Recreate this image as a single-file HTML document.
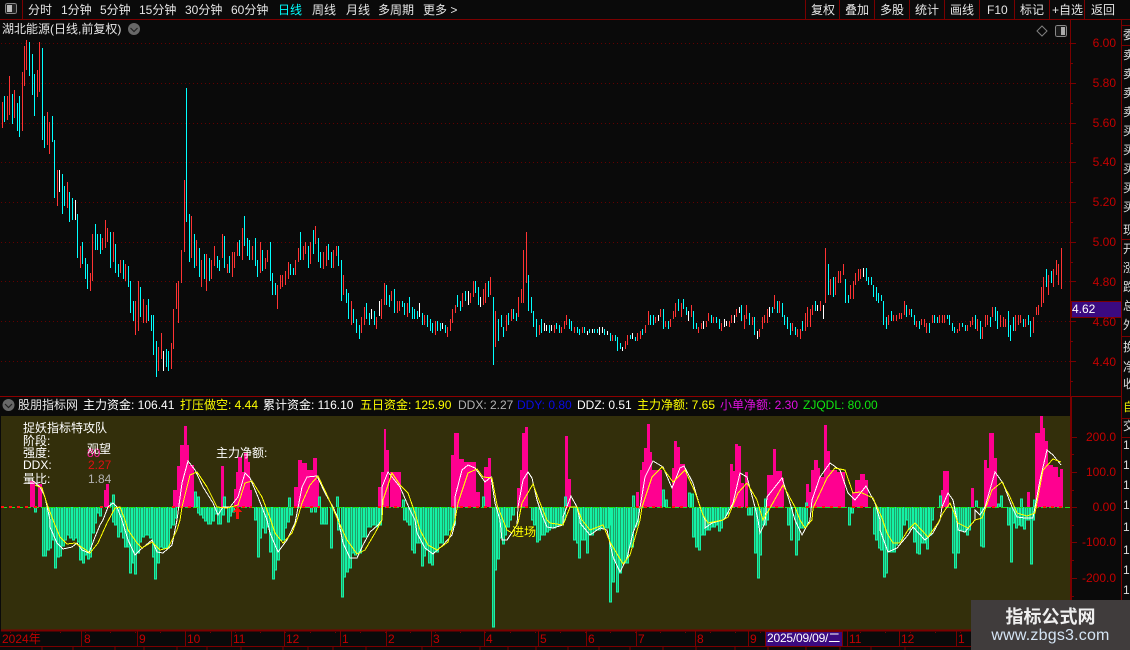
<!DOCTYPE html>
<html><head><meta charset="utf-8"><style>
html,body{margin:0;padding:0;background:#0a0a0a}
#r{position:relative;width:1130px;height:650px;overflow:hidden;background:#0a0a0a;font:12px/14px "Liberation Sans","WenQuanYi Zen Hei","Noto Sans CJK SC",sans-serif;color:#e6e6e6}
#r span{position:absolute;white-space:pre}
svg{position:absolute;left:0;top:0}
.p{color:#c40000;text-align:right;right:14px}
.y{color:#ff0}.w{color:#fff}.g{color:#b4b4b4}
</style></head><body><div id="r">
<svg width="1130" height="650" shape-rendering="crispEdges" fill="none">
<!-- frames -->
<g stroke="#7a0000">
<path d="M0 19.5H1130M22.5 0V19M805.5 0V19M839.5 0V19M874.5 0V19M909.5 0V19M944.5 0V19M979.5 0V19M1014.5 0V19M1049.5 0V19M1084.5 0V19"/>
<path d="M1122 25.5H1130M1122 45.5H1130M1122 239.5H1130M1122 336.5H1130M1122 418.5H1130M1122 437.5H1130"/>
<path d="M1070.5 20V396M1121.5 20V650"/>
<path d="M1071 43.5H1076M1071 83.5H1076M1071 123.5H1076M1071 162.5H1076M1071 202.5H1076M1071 242.5H1076M1071 281.5H1076M1071 321.5H1076M1071 361.5H1076M1071 63.5H1073M1071 103.5H1073M1071 143.5H1073M1071 182.5H1073M1071 222.5H1073M1071 262.5H1073M1071 301.5H1073M1071 341.5H1073M1071 381.5H1073"/>
<path d="M1072 437.5H1077M1072 472.5H1077M1072 507.5H1077M1072 542.5H1077M1072 578.5H1077M1072 454.5H1074M1072 490.5H1074M1072 525.5H1074M1072 560.5H1074M1072 596.5H1074"/>
</g>
<path d="M0 396.5H1070M1072 396.5H1121" stroke="#8c0000"/>
<path d="M1071 396V650" stroke="#7a0000" stroke-width="2"/>
<g stroke="#640000" stroke-dasharray="1 3">
<path d="M1 43.5H1070M1 83.5H1070M1 123.5H1070M1 162.5H1070M1 202.5H1070M1 242.5H1070M1 281.5H1070M1 321.5H1070M1 361.5H1070"/>
</g>
<!-- candles -->
<path stroke="#ff3333" d="M2.5 102V128M7.5 96V120M9.5 76V115M14.5 90V118M22.5 72V131M24.5 46V86M26.5 40V70M37.5 70V97M39.5 42V92M47.5 112V145M49.5 122V154M57.5 170V206M67.5 182V208M80.5 246V268M90.5 273V291M92.5 234V281M102.5 238V250M105.5 220V248M107.5 228V242M113.5 232V262M120.5 260V273M125.5 264V281M135.5 301V335M138.5 281V331M143.5 299V323M146.5 305V323M158.5 347V371M161.5 333V359M171.5 343V369M173.5 309V349M176.5 283V309M178.5 281V323M181.5 250V283M184.5 180V252M191.5 216V258M196.5 240V266M201.5 260V287M206.5 254V291M211.5 260V279M214.5 246V266M222.5 234V258M227.5 264V273M232.5 252V277M234.5 252V268M237.5 242V256M242.5 228V260M252.5 246V260M260.5 242V273M265.5 258V269M267.5 250V262M277.5 285V309M280.5 275V289M282.5 275V287M285.5 271V285M288.5 262V279M295.5 260V275M298.5 248V262M303.5 246V260M305.5 242V254M310.5 242V264M315.5 226V244M323.5 252V269M326.5 246V266M333.5 250V268M336.5 246V256M343.5 275V295M351.5 301V325M361.5 317V333M364.5 307V325M376.5 317V329M381.5 299V319M384.5 283V305M391.5 291V301M397.5 301V313M399.5 301V311M407.5 303V317M424.5 315V325M435.5 321V335M447.5 327V337M450.5 319V331M452.5 309V323M455.5 305V313M462.5 293V307M470.5 293V303M473.5 281V297M483.5 289V305M485.5 283V303M490.5 277V295M495.5 311V347M506.5 315V331M511.5 309V321M518.5 297V317M521.5 289V303M523.5 250V303M526.5 232V283M539.5 325V335M554.5 325V333M561.5 327V333M564.5 321V329M566.5 315V325M574.5 327V333M582.5 327V333M612.5 335V341M625.5 341V349M627.5 335V345M637.5 333V341M640.5 331V339M645.5 325V333M648.5 311V325M655.5 317V323M660.5 309V317M665.5 321V327M670.5 319V327M673.5 311V319M675.5 303V317M681.5 303V317M691.5 305V317M698.5 327V333M701.5 323V329M706.5 321V327M708.5 313V321M713.5 317V323M721.5 323V331M729.5 321V327M731.5 315V323M736.5 309V317M744.5 315V329M746.5 305V319M752.5 317V325M759.5 329V337M762.5 317V329M764.5 315V323M767.5 309V323M774.5 295V309M779.5 301V313M792.5 323V331M797.5 329V337M800.5 329V339M805.5 313V331M807.5 307V327M810.5 309V327M812.5 305V315M820.5 301V311M825.5 248V303M830.5 279V295M835.5 277V295M838.5 271V283M840.5 271V283M843.5 264V275M850.5 285V299M853.5 281V299M855.5 273V285M858.5 269V281M860.5 269V279M888.5 315V325M893.5 315V321M896.5 315V321M899.5 313V319M901.5 313V319M904.5 301V315M909.5 309V315M916.5 321V327M921.5 319V325M924.5 319V327M926.5 323V333M932.5 315V323M939.5 315V323M942.5 315V323M944.5 315V323M957.5 329V333M959.5 323V331M967.5 325V331M970.5 321V327M972.5 317V325M977.5 319V331M982.5 327V339M985.5 315V327M987.5 315V325M992.5 307V317M1000.5 315V327M1003.5 317V327M1005.5 319V327M1015.5 315V331M1018.5 315V325M1020.5 315V323M1025.5 319V327M1033.5 317V333M1036.5 307V315M1038.5 305V315M1041.5 287V307M1043.5 277V303M1048.5 275V295M1053.5 269V287M1056.5 260V275M1058.5 264V285M1061.5 248V289"/>
<path stroke="#00ffff" d="M4.5 96V122M12.5 94V124M17.5 103V131M19.5 96V137M29.5 42V76M32.5 54V95M34.5 74V116M42.5 48V140M44.5 116V148M52.5 116V142M54.5 140V198M62.5 174V214M64.5 186V206M69.5 192V222M72.5 198V220M77.5 214V258M82.5 242V264M85.5 258V279M87.5 264V289M95.5 224V250M97.5 234V250M100.5 234V254M110.5 232V268M115.5 244V273M118.5 264V277M123.5 260V279M128.5 266V287M130.5 281V313M133.5 301V321M140.5 287V317M148.5 299V321M151.5 315V331M153.5 315V355M156.5 341V377M166.5 349V367M168.5 351V371M186.5 88V222M189.5 214V262M194.5 234V268M199.5 248V277M204.5 254V279M209.5 258V281M217.5 256V268M219.5 260V271M224.5 236V268M229.5 256V273M239.5 240V256M244.5 216V246M247.5 238V256M249.5 240V260M255.5 238V266M257.5 260V277M262.5 250V271M270.5 242V281M272.5 273V295M275.5 283V295M290.5 264V275M293.5 268V275M300.5 232V260M308.5 246V268M313.5 230V254M318.5 238V262M320.5 252V268M328.5 244V260M331.5 252V268M338.5 246V266M341.5 260V301M346.5 289V303M348.5 293V319M353.5 309V323M356.5 319V333M359.5 325V339M366.5 303V319M369.5 313V325M374.5 311V325M386.5 285V305M389.5 295V307M394.5 289V313M402.5 301V307M404.5 303V315M409.5 297V313M412.5 307V319M414.5 309V319M417.5 311V319M422.5 313V325M427.5 315V327M430.5 319V331M432.5 323V333M437.5 321V331M440.5 323V331M445.5 325V333M457.5 295V307M460.5 301V311M465.5 291V301M475.5 281V293M478.5 287V305M488.5 281V297M493.5 297V365M498.5 319V341M501.5 315V327M503.5 327V337M508.5 313V325M513.5 309V319M516.5 313V321M528.5 275V311M531.5 297V313M533.5 311V327M536.5 319V337M541.5 319V333M549.5 325V333M556.5 323V329M559.5 325V333M569.5 319V329M571.5 321V331M577.5 327V333M579.5 329V335M584.5 327V333M589.5 329V333M594.5 329V333M597.5 329V333M604.5 329V335M610.5 333V341M615.5 335V341M617.5 337V351M620.5 343V349M630.5 335V339M635.5 337V341M642.5 329V335M650.5 315V325M653.5 315V325M663.5 309V329M668.5 321V329M678.5 299V311M683.5 299V309M686.5 307V315M693.5 311V329M696.5 323V329M711.5 315V323M716.5 317V323M719.5 319V329M741.5 305V321M749.5 313V325M754.5 317V335M772.5 307V313M777.5 301V313M782.5 303V317M784.5 315V325M787.5 317V329M790.5 323V335M795.5 327V335M802.5 321V331M815.5 301V311M828.5 264V295M833.5 277V297M845.5 279V303M848.5 295V303M866.5 268V281M868.5 277V285M871.5 277V285M873.5 285V297M876.5 287V301M878.5 293V303M881.5 295V301M883.5 301V325M886.5 317V329M891.5 311V321M906.5 305V317M911.5 309V317M914.5 315V325M919.5 321V329M929.5 323V333M934.5 315V323M937.5 317V323M947.5 315V319M949.5 315V325M952.5 323V331M954.5 327V333M962.5 323V327M965.5 325V331M975.5 315V329M980.5 321V339M990.5 317V327M995.5 307V321M997.5 311V329M1008.5 311V337M1010.5 325V341M1013.5 317V331M1023.5 319V327M1028.5 315V325M1030.5 321V337M1046.5 269V287M1051.5 271V283"/>
<path stroke="#ffffff" d="M59.5 170V192M75.5 200V220M163.5 351V371M371.5 309V319M379.5 301V316M419.5 303V317M442.5 323V329M468.5 291V305M480.5 297V307M544.5 323V331M546.5 325V331M551.5 325V331M587.5 331V335M592.5 329V333M599.5 327V335M602.5 327V333M607.5 331V335M622.5 347V351M632.5 333V339M658.5 315V321M688.5 311V321M703.5 321V329M724.5 319V327M726.5 321V326M734.5 315V323M739.5 307V313M757.5 331V339M769.5 307V317M817.5 305V311M823.5 305V319M863.5 268V277"/>
</svg>
<svg width="1130" height="650" fill="none">
<rect x="1" y="416" width="1069" height="214" fill="#332f0b" shape-rendering="crispEdges"/>
<path fill="#ff0090" shape-rendering="crispEdges" d="M30 481H35V507H30ZM38 484H42V507H38ZM104 490H106V507H104ZM106 484H109V507H106ZM173 490H177V507H173ZM177 466H180V507H177ZM180 445H184V507H180ZM184 426H187V507H184ZM187 445H189V507H187ZM189 465H194V507H189ZM221 466H224V507H221ZM234 489H236V507H234ZM236 472H238V507H236ZM238 457H240V507H238ZM240 457H242V507H240ZM242 472H244V507H242ZM244 453H248V507H244ZM248 462H250V507H248ZM250 490H252V507H250ZM294 487H298V507H294ZM298 460H302V507H298ZM302 463H307V507H302ZM307 470H313V507H307ZM313 458H317V507H313ZM317 480H319V507H317ZM378 487H381V507H378ZM381 472H384V507H381ZM384 429H386V507H384ZM386 450H389V507H386ZM390 472H401V507H390ZM451 455H454V507H451ZM454 433H459V507H454ZM459 459H464V507H459ZM464 462H476V507H464ZM476 492H480V507H476ZM484 467H488V507H484ZM488 458H491V507H488ZM517 488H520V507H517ZM520 470H522V507H520ZM522 433H525V507H522ZM525 427H528V507H525ZM565 436H568V507H565ZM568 479H571V507H568ZM636 492H639V507H636ZM640 470H642V507H640ZM642 462H644V507H642ZM644 448H647V507H644ZM647 424H650V507H647ZM650 452H652V507H650ZM652 470H662V507H652ZM672 468H674V507H672ZM674 441H677V507H674ZM677 447H680V507H677ZM680 464H685V507H680ZM685 473H687V507H685ZM730 464H733V507H730ZM733 471H735V507H733ZM735 444H738V507H735ZM738 446H741V507H738ZM741 483H744V507H741ZM745 472H748V507H745ZM767 475H773V507H767ZM773 449H776V507H773ZM776 471H782V507H776ZM782 478H784V507H782ZM806 484H809V507H806ZM809 492H811V507H809ZM811 470H814V507H811ZM814 460H818V507H814ZM818 468H820V507H818ZM820 477H824V507H820ZM824 425H827V507H824ZM827 451H830V507H827ZM830 470H837V507H830ZM837 472H845V507H837ZM852 492H855V507H852ZM855 480H860V507H855ZM860 474H865V507H860ZM865 480H868V507H865ZM941 490H943V507H941ZM943 471H949V507H943ZM971 488H974V507H971ZM984 460H987V507H984ZM987 468H989V507H987ZM989 433H994V507H989ZM994 458H997V507H994ZM1027 492H1030V507H1027ZM1035 433H1040V507H1035ZM1040 416H1043V507H1040ZM1043 428H1045V507H1043ZM1045 441H1048V507H1045ZM1048 465H1053V507H1048ZM1053 467H1058V507H1053ZM1058 477H1060V507H1058ZM1060 469H1063V507H1060Z"/>
<path stroke="#14f2a6" fill="#14f2a6" fill-opacity=".6" shape-rendering="crispEdges" d="M34.5 507V512h2V507M42.5 507V556h2V507M44.5 507V556h2V507M47.5 507V550h2V507M49.5 507V548h2V507M52.5 507V540h2V507M54.5 507V568h2V507M57.5 507V557h2V507M59.5 507V556h2V507M62.5 507V546h2V507M64.5 507V540h2V507M67.5 507V535h2V507M69.5 507V538h2V507M72.5 507V540h2V507M74.5 507V538h2V507M77.5 507V542h2V507M79.5 507V560h2V507M82.5 507V563h2V507M84.5 507V555h2V507M87.5 507V559h2V507M89.5 507V557h2V507M92.5 507V533h2V507M94.5 507V523h2V507M97.5 507V513h2V507M99.5 507V516h2V507M110.5 507V503h2V507M112.5 507V495h2V507M112.5 507V522h2V507M114.5 507V525h2V507M117.5 507V537h2V507M119.5 507V532h2V507M122.5 507V538h2V507M124.5 507V547h2V507M127.5 507V547h2V507M129.5 507V573h2V507M132.5 507V563h2V507M134.5 507V574h2V507M137.5 507V553h2V507M139.5 507V542h2V507M142.5 507V537h2V507M144.5 507V535h2V507M147.5 507V535h2V507M149.5 507V538h2V507M152.5 507V557h2V507M154.5 507V579h2V507M157.5 507V563h2V507M159.5 507V547h2V507M162.5 507V548h2V507M164.5 507V548h2V507M167.5 507V548h2V507M169.5 507V528h2V507M172.5 507V525h2V507M174.5 507V518h2V507M194.5 507V492h2V507M197.5 507V497h2V507M197.5 507V513h2V507M199.5 507V515h2V507M202.5 507V518h2V507M204.5 507V521h2V507M207.5 507V524h2V507M209.5 507V524h2V507M212.5 507V521h2V507M214.5 507V514h2V507M217.5 507V524h2V507M219.5 507V524h2V507M222.5 507V515h2V507M223.5 507V497h2V507M227.5 507V522h2V507M229.5 507V516h2V507M232.5 507V512h2V507M254.5 507V520h2V507M257.5 507V557h2V507M259.5 507V538h2V507M262.5 507V528h2V507M264.5 507V533h2V507M267.5 507V527h2V507M269.5 507V552h2V507M272.5 507V579h2V507M274.5 507V570h2V507M277.5 507V560h2V507M279.5 507V540h2V507M282.5 507V540h2V507M284.5 507V528h2V507M287.5 507V522h2V507M288.5 507V498h2V507M290.5 507V515h2V507M310.5 507V512h2V507M314.5 507V512h2V507M318.5 507V497h2V507M320.5 507V524h2V507M323.5 507V524h2V507M325.5 507V524h2V507M330.5 507V548h2V507M336.5 507V497h2V507M337.5 507V530h2V507M341.5 507V597h2V507M343.5 507V577h2V507M346.5 507V572h2V507M349.5 507V568h2V507M351.5 507V553h2V507M354.5 507V555h2V507M356.5 507V553h2V507M359.5 507V553h2V507M361.5 507V537h2V507M364.5 507V537h2V507M366.5 507V527h2V507M369.5 507V527h2V507M371.5 507V525h2V507M374.5 507V525h2V507M376.5 507V527h2V507M379.5 507V525h2V507M402.5 507V500h2V507M403.5 507V520h2V507M406.5 507V522h2V507M408.5 507V525h2V507M411.5 507V550h2V507M413.5 507V553h2V507M416.5 507V543h2V507M418.5 507V543h2V507M421.5 507V566h2V507M423.5 507V556h2V507M426.5 507V550h2V507M428.5 507V563h2V507M431.5 507V565h2V507M433.5 507V552h2V507M436.5 507V552h2V507M438.5 507V543h2V507M441.5 507V543h2V507M443.5 507V535h2V507M446.5 507V535h2V507M448.5 507V530h2V507M451.5 507V530h2V507M453.5 507V525h2V507M482.5 507V497h2V507M492.5 507V627h2V507M494.5 507V570h2V507M497.5 507V559h2V507M499.5 507V538h2V507M502.5 507V544h2V507M504.5 507V535h2V507M507.5 507V527h2V507M509.5 507V520h2V507M512.5 507V515h2V507M531.5 507V520h2V507M533.5 507V525h2V507M536.5 507V542h2V507M538.5 507V540h2V507M541.5 507V535h2V507M543.5 507V535h2V507M546.5 507V532h2V507M548.5 507V530h2V507M551.5 507V528h2V507M553.5 507V528h2V507M556.5 507V526h2V507M558.5 507V525h2V507M561.5 507V525h2V507M563.5 507V520h2V507M564.5 507V497h2V507M573.5 507V540h2V507M576.5 507V543h2V507M578.5 507V558h2V507M581.5 507V540h2V507M583.5 507V540h2V507M586.5 507V553h2V507M588.5 507V535h2V507M591.5 507V535h2V507M593.5 507V530h2V507M596.5 507V530h2V507M598.5 507V530h2V507M601.5 507V528h2V507M603.5 507V528h2V507M606.5 507V528h2V507M608.5 507V525h2V507M609.5 507V602h2V507M612.5 507V582h2V507M614.5 507V560h2V507M616.5 507V592h2V507M619.5 507V573h2V507M622.5 507V563h2V507M624.5 507V563h2V507M626.5 507V563h2V507M629.5 507V547h2V507M631.5 507V547h2V507M632.5 507V496h2V507M634.5 507V527h2V507M636.5 507V525h2V507M662.5 507V490h2V507M665.5 507V500h2V507M688.5 507V493h2V507M691.5 507V494h2V507M692.5 507V537h2V507M695.5 507V547h2V507M698.5 507V550h2V507M700.5 507V535h2V507M703.5 507V535h2V507M705.5 507V530h2V507M708.5 507V530h2V507M710.5 507V527h2V507M713.5 507V527h2V507M715.5 507V525h2V507M718.5 507V531h2V507M720.5 507V528h2V507M723.5 507V518h2V507M726.5 507V514h2V507M747.5 507V515h2V507M750.5 507V515h2V507M754.5 507V553h2V507M757.5 507V578h2V507M759.5 507V555h2V507M761.5 507V525h2V507M764.5 507V525h2V507M764.5 507V499h2V507M766.5 507V520h2V507M787.5 507V525h2V507M790.5 507V540h2V507M795.5 507V555h2V507M797.5 507V540h2V507M800.5 507V528h2V507M802.5 507V528h2V507M805.5 507V526h2V507M805.5 507V503h2V507M848.5 507V525h2V507M851.5 507V513h2V507M873.5 507V534h2V507M875.5 507V540h2V507M878.5 507V548h2V507M880.5 507V550h2V507M883.5 507V577h2V507M885.5 507V573h2V507M888.5 507V552h2V507M890.5 507V552h2V507M893.5 507V552h2V507M895.5 507V545h2V507M897.5 507V543h2V507M900.5 507V540h2V507M903.5 507V525h2V507M906.5 507V520h2V507M908.5 507V530h2V507M910.5 507V525h2V507M913.5 507V542h2V507M916.5 507V553h2V507M918.5 507V554h2V507M921.5 507V543h2V507M923.5 507V543h2V507M926.5 507V549h2V507M929.5 507V535h2V507M931.5 507V520h2V507M939.5 507V496h2V507M952.5 507V553h2V507M954.5 507V568h2V507M957.5 507V553h2V507M959.5 507V530h2V507M961.5 507V530h2V507M963.5 507V532h2V507M966.5 507V535h2V507M968.5 507V530h2V507M975.5 507V501h2V507M980.5 507V546h2V507M982.5 507V547h2V507M997.5 507V504h2V507M1000.5 507V496h2V507M1007.5 507V525h2V507M1010.5 507V562h2V507M1012.5 507V523h2V507M1015.5 507V528h2V507M1017.5 507V525h2V507M1020.5 507V499h2V507M1020.5 507V526h2V507M1023.5 507V529h2V507M1025.5 507V520h2V507M1027.5 507V520h2V507M1030.5 507V564h2V507M1032.5 507V520h2V507M1033.5 507V500h2V507"/>
<path stroke="#19e619" shape-rendering="crispEdges" d="M1 507.5H1070" stroke-dasharray="6 2"/>
<path stroke="#ff1010" stroke-width="2" shape-rendering="crispEdges" d="M1 507H30M34 507H42M100 507H110M172 507H194M234 507H252M294 507H320M378 507H400M452 507H491M517 507H528M565 507H571M636 507H662M672 507H687M730 507H748M767 507H784M806 507H845M852 507H868M941 507H949M984 507H997M1035 507H1063" stroke-dasharray="3 5"/>
<polyline stroke="#ffffff" shape-rendering="crispEdges" points="32,480 40,487 45,497 50,520 50,527 57,543 63,549 72,547 77,543 82,550 89,553 95,537 100,525 103,520 108,507 113,503 117,507 122,520 128,540 135,555 140,550 152,540 157,552 163,553 172,545 175,530 177,520 182,483 188,461 195,470 203,487 213,503 218,515 223,507 230,507 238,497 245,473 250,478 258,497 267,520 270,533 278,552 287,540 295,523 297,513 302,487 307,477 317,476 325,493 333,507 338,518 343,543 350,558 357,558 363,545 370,532 378,525 382,520 382,487 388,472 400,487 410,510 415,520 417,533 425,548 433,554 443,545 452,535 455,523 455,497 462,470 468,465 475,468 485,482 491,477 495,503 500,520 502,540 507,540 517,525 518,507 523,480 528,472 532,478 537,500 542,515 547,527 553,528 563,525 563,517 571,496 577,507 580,520 580,523 590,535 600,528 607,530 613,557 620,572 627,558 633,533 638,520 645,477 653,461 663,467 672,488 680,468 684,466 693,483 700,507 705,520 705,528 712,523 723,520 725,518 733,503 740,473 747,477 755,507 758,520 760,533 765,523 767,497 782,478 790,503 795,520 802,535 810,520 812,500 820,477 830,463 840,470 848,493 855,500 866,486 875,503 880,520 880,530 888,552 897,548 908,535 913,527 925,540 933,533 940,520 942,507 948,493 953,500 957,520 958,530 965,532 975,520 975,510 980,515 985,507 995,472 1003,483 1012,507 1017,517 1025,518 1033,518 1040,480 1047,450 1053,455 1061,465"/>
<polyline stroke="#ffff00" shape-rendering="crispEdges" points="35,485 42,488 48,507 55,525 60,537 67,544 75,543 83,548 90,553 98,543 107,523 115,508 120,507 125,520 128,530 137,543 142,548 152,542 160,550 168,548 177,530 180,520 182,507 190,475 197,472 207,487 217,507 227,508 238,505 245,483 252,481 262,497 270,518 275,533 283,543 292,533 297,520 302,503 310,485 318,476 328,497 337,518 347,540 357,554 365,550 375,533 382,520 383,500 392,473 400,485 408,493 415,513 420,530 428,545 437,550 448,542 455,520 458,503 468,473 477,469 483,477 492,478 497,505 503,520 507,530 512,533 518,523 522,503 533,484 540,503 547,520 550,523 563,525 570,507 577,507 582,520 590,530 603,525 610,542 623,564 630,555 640,520 642,507 652,477 662,467 673,482 685,470 695,492 703,515 708,523 723,520 728,517 738,493 747,483 757,500 763,520 770,508 783,485 795,507 800,520 805,528 812,520 813,508 827,478 835,468 845,470 853,493 860,492 873,498 882,518 887,533 893,543 900,543 908,530 915,523 928,537 938,523 943,513 950,503 955,515 958,523 968,528 975,520 982,518 992,490 1002,482 1010,497 1017,513 1027,516 1035,513 1043,470 1053,459 1061,462"/>
<path fill="#ff1010" shape-rendering="crispEdges" d="M237 507L233 512H236V519H239V512H242Z"/>
<g stroke="#7a0000" shape-rendering="crispEdges">
<path d="M1 630.5H1070" stroke-width="2"/>
<path d="M0 646.5H1070M81.5 631V646M137.5 631V646M185.5 631V646M231.5 631V646M284.5 631V646M340.5 631V646M386.5 631V646M431.5 631V646M484.5 631V646M538.5 631V646M586.5 631V646M636.5 631V646M695.5 631V646M748.5 631V646M847.5 631V646M899.5 631V646M956.5 631V646"/>
<path d="M42 646V650M73 646V650M115 646V650M144 646V650M177 646V650M207 646V650M241 646V650M283 646V650M308 646V650M333 646V650M366 646V650M422 646V650M480 646V650M508 646V650M536 646V650M568 646V650M599 646V650M630 646V650M663 646V650M696 646V650M735 646V650M768 646V650M806 646V650M840 646V650M871 646V650M905 646V650"/>
<path d="M10 632.5H1070" stroke-dasharray="1 24"/>
</g>
<path fill="#3b0a80" stroke="#7a0000" shape-rendering="crispEdges" d="M1071.5 301.5H1121.5V317.5H1071.5ZM765.5 631.5H842.5V646.5H765.5Z"/>
<rect x="971" y="600" width="159" height="50" fill="#403c3c"/>
<!-- icons -->
<rect x="5.5" y="3.5" width="11" height="10" rx="2" stroke="#888" fill="#222" shape-rendering="crispEdges"/>
<rect x="7" y="5" width="5" height="7" fill="#bbb" shape-rendering="crispEdges"/>
<circle cx="134" cy="29" r="6" fill="#686868"/><path d="M130.5 28L134 31.5L137.5 28" stroke="#222" stroke-width="1.2"/>
<circle cx="8.5" cy="405" r="6" fill="#686868"/><path d="M5 404L8.5 407.5L12 404" stroke="#222" stroke-width="1.2"/>
<path d="M1042 26L1047 31L1042 36L1037 31Z" stroke="#808080"/>
<rect x="1055.5" y="25.5" width="11" height="11" rx="2" stroke="#888" fill="#1a1a1a" shape-rendering="crispEdges"/>
<rect x="1061" y="27" width="4" height="8" fill="#aaa" shape-rendering="crispEdges"/>
</svg>
<!-- top bar -->
<span style="left:28px;top:3px">分时</span><span style="left:61px;top:3px">1分钟</span><span style="left:100px;top:3px">5分钟</span><span style="left:139px;top:3px">15分钟</span><span style="left:185px;top:3px">30分钟</span><span style="left:231px;top:3px">60分钟</span><span style="left:278px;top:3px;color:#0ff">日线</span><span style="left:312px;top:3px">周线</span><span style="left:346px;top:3px">月线</span><span style="left:378px;top:3px">多周期</span><span style="left:423px;top:3px">更多 &gt;</span>
<span style="left:811px;top:3px">复权</span><span style="left:845px;top:3px">叠加</span><span style="left:880px;top:3px">多股</span><span style="left:915px;top:3px">统计</span><span style="left:950px;top:3px">画线</span><span style="left:987px;top:3px">F10</span><span style="left:1020px;top:3px">标记</span><span style="left:1052px;top:3px">+自选</span><span style="left:1091px;top:3px">返回</span>
<span style="left:2px;top:22px">湖北能源(日线,前复权)</span>
<!-- price axis -->
<span class="p" style="top:36px">6.00</span><span class="p" style="top:76px">5.80</span><span class="p" style="top:116px">5.60</span><span class="p" style="top:155px">5.40</span><span class="p" style="top:195px">5.20</span><span class="p" style="top:235px">5.00</span><span class="p" style="top:275px">4.80</span><span class="p" style="top:315px">4.60</span><span class="p" style="top:355px">4.40</span>
<span style="left:1072px;top:302px;color:#fff">4.62</span>
<!-- header -->
<span style="left:18px;top:398px">股朋指标网</span><span class="w" style="left:83px;top:398px">主力资金: 106.41</span><span class="y" style="left:180px;top:398px">打压做空: 4.44</span><span class="w" style="left:263px;top:398px">累计资金: 116.10</span><span class="y" style="left:360px;top:398px">五日资金: 125.90</span><span class="g" style="left:458px;top:398px">DDX: 2.27</span><span style="left:517px;top:398px;color:#0a0ae6">DDY: 0.80</span><span class="w" style="left:577px;top:398px">DDZ: 0.51</span><span class="y" style="left:637px;top:398px">主力净额: 7.65</span><span style="left:720px;top:398px;color:#e010e0">小单净额: 2.30</span><span style="left:803px;top:398px;color:#10e610">ZJQDL: 80.00</span>
<!-- overlay -->
<span class="w" style="left:23px;top:421px">捉妖指标特攻队</span><span class="w" style="left:23px;top:434px">阶段:</span><span class="w" style="left:23px;top:446px">强度:</span><span class="w" style="left:23px;top:458px">DDX:</span><span class="w" style="left:23px;top:472px">量比:</span>
<span style="left:87px;top:446px;color:#ff1fa0">80</span><span class="w" style="left:87px;top:442px">观望</span><span style="left:88px;top:458px;color:#e01010">2.27</span><span class="g" style="left:88px;top:472px">1.84</span>
<span class="w" style="left:216px;top:446px">主力净额:</span><span class="y" style="left:512px;top:525px">进场</span>
<!-- lower axis -->
<span class="p" style="top:430px">200.0</span><span class="p" style="top:465px">100.0</span><span class="p" style="top:500px">0.00</span><span class="p" style="top:535px">-100.0</span><span class="p" style="top:571px">-200.0</span>
<!-- date axis -->
<span style="left:2px;top:632px;color:#c40000">2024年</span><span style="left:84px;top:632px;color:#c40000">8</span><span style="left:139px;top:632px;color:#c40000">9</span><span style="left:187px;top:632px;color:#c40000">10</span><span style="left:233px;top:632px;color:#c40000">11</span><span style="left:286px;top:632px;color:#c40000">12</span><span style="left:342px;top:632px;color:#c40000">1</span><span style="left:388px;top:632px;color:#c40000">2</span><span style="left:433px;top:632px;color:#c40000">3</span><span style="left:486px;top:632px;color:#c40000">4</span><span style="left:540px;top:632px;color:#c40000">5</span><span style="left:588px;top:632px;color:#c40000">6</span><span style="left:638px;top:632px;color:#c40000">7</span><span style="left:697px;top:632px;color:#c40000">8</span><span style="left:750px;top:632px;color:#c40000">9</span><span style="left:767px;top:631px;color:#fff;letter-spacing:-.2px">2025/09/09/二</span><span style="left:849px;top:632px;color:#c40000">11</span><span style="left:901px;top:632px;color:#c40000">12</span><span style="left:958px;top:632px;color:#c40000">1</span>
<!-- right clipped column -->
<div style="position:absolute;left:1123px;top:20px;width:7px;height:630px;overflow:hidden;color:#ddd">
<span style="left:0;top:8px">委</span><span style="left:0;top:28px">卖</span><span style="left:0;top:47px">卖</span><span style="left:0;top:66px">卖</span><span style="left:0;top:85px">卖</span><span style="left:0;top:104px">买</span><span style="left:0;top:123px">买</span><span style="left:0;top:142px">买</span><span style="left:0;top:161px">买</span><span style="left:0;top:180px">买</span><span style="left:0;top:203px">现</span><span style="left:0;top:222px">开</span><span style="left:0;top:241px">涨</span><span style="left:0;top:260px">跌</span><span style="left:0;top:279px">总</span><span style="left:0;top:298px">外</span><span style="left:0;top:320px">换</span><span style="left:0;top:340px">净</span><span style="left:0;top:357px">收</span>
<span style="left:0;top:380px;color:#e6e600">自</span><span style="left:0;top:399px">交</span><span style="left:0;top:418px">1</span><span style="left:0;top:438px">1</span><span style="left:0;top:458px">1</span><span style="left:0;top:478px">1</span><span style="left:0;top:500px">1</span><span style="left:0;top:523px">1</span><span style="left:0;top:543px">1</span><span style="left:0;top:563px">1</span>
</div>
<span style="left:971px;top:604px;width:159px;text-align:center;font:bold 18px/24px 'Noto Sans CJK SC',sans-serif;color:#efefef">指标公式网</span>
<span style="left:971px;top:627px;width:159px;text-align:center;font:16px/18px 'Liberation Sans',sans-serif;letter-spacing:.2px;color:#d4e4f4">www.zbgs3.com</span>
</div></body></html>
